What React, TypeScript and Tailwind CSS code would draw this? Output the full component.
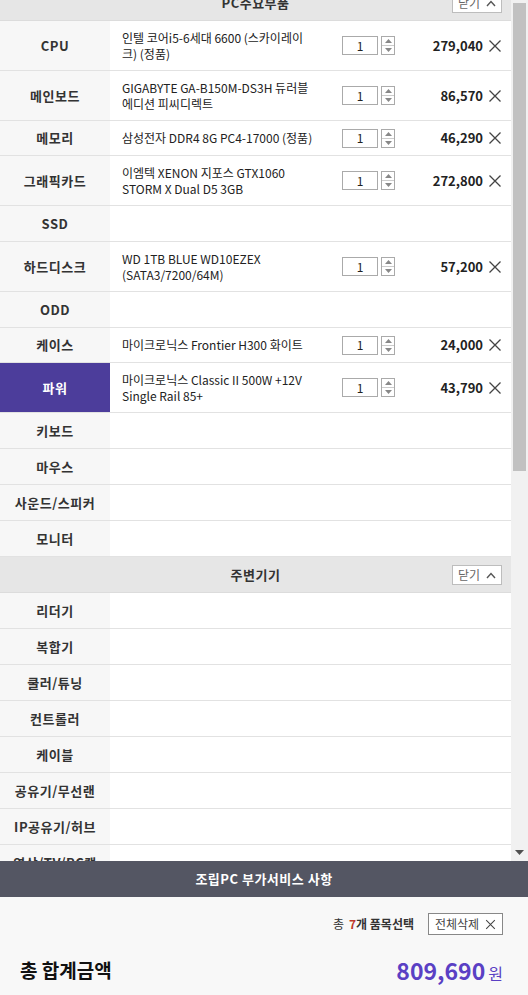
import { ReactNode } from "react";

type Part = { label: string; lines?: string[]; price?: string; active?: boolean };

const mainParts: Part[] = [
  { label: "CPU", lines: ["인텔 코어i5-6세대 6600 (스카이레이", "크) (정품)"], price: "279,040" },
  { label: "메인보드", lines: ["GIGABYTE GA-B150M-DS3H 듀러블", "에디션 피씨디렉트"], price: "86,570" },
  { label: "메모리", lines: ["삼성전자 DDR4 8G PC4-17000 (정품)"], price: "46,290" },
  { label: "그래픽카드", lines: ["이엠텍 XENON 지포스 GTX1060", "STORM X Dual D5 3GB"], price: "272,800" },
  { label: "SSD" },
  { label: "하드디스크", lines: ["WD 1TB BLUE WD10EZEX", "(SATA3/7200/64M)"], price: "57,200" },
  { label: "ODD" },
  { label: "케이스", lines: ["마이크로닉스 Frontier H300 화이트"], price: "24,000" },
  { label: "파워", lines: ["마이크로닉스 Classic II 500W +12V", "Single Rail 85+"], price: "43,790", active: true },
  { label: "키보드" },
  { label: "마우스" },
  { label: "사운드/스피커" },
  { label: "모니터" },
];

const extraParts: Part[] = [
  { label: "리더기" },
  { label: "복합기" },
  { label: "쿨러/튜닝" },
  { label: "컨트롤러" },
  { label: "케이블" },
  { label: "공유기/무선랜" },
  { label: "IP공유기/허브" },
  { label: "영상/TV/PC캠" },
];

function XIcon({ size = 14, className = "" }: { size?: number; className?: string }) {
  return (
    <svg width={size} height={size} viewBox="0 0 14 14" className={className}>
      <path d="M1.5 1.5 L12.5 12.5 M12.5 1.5 L1.5 12.5" stroke="currentColor" strokeWidth="1.3" fill="none" />
    </svg>
  );
}

function SectionHeader({ title }: { title: string }) {
  return (
    <div className="relative flex h-[36px] shrink-0 items-center justify-center border-b border-[#dcdcdc] bg-[#e6e6e6]">
      <span className="text-[13px] font-bold text-[#333] tracking-[0.5px]">{title}</span>
      <button className="absolute right-[9px] top-[8px] flex h-[20px] w-[50px] items-center justify-center gap-[6px] border border-[#bdbdbd] bg-white text-[12px] text-[#666]">
        <span>닫기</span>
        <svg width="10" height="7" viewBox="0 0 10 7">
          <path d="M1 6 L5 1.5 L9 6" stroke="#555" strokeWidth="1.4" fill="none" />
        </svg>
      </button>
    </div>
  );
}

function Qty() {
  return (
    <div className="flex items-center gap-[3px]">
      <div className="flex h-[19px] w-[36px] items-center justify-center border border-[#aaa] bg-white text-[12px] text-[#222]">
        1
      </div>
      <div className="flex h-[19px] w-[14px] flex-col border border-[#aaa] bg-white">
        <div className="flex flex-1 items-center justify-center border-b border-[#ccc]">
          <svg width="7" height="4" viewBox="0 0 7 4"><path d="M0 4 L3.5 0 L7 4 Z" fill="#888" /></svg>
        </div>
        <div className="flex flex-1 items-center justify-center">
          <svg width="7" height="4" viewBox="0 0 7 4"><path d="M0 0 L3.5 4 L7 0 Z" fill="#888" /></svg>
        </div>
      </div>
    </div>
  );
}

function Row({ part }: { part: Part }) {
  const n = part.lines?.length ?? 0;
  // two-line rows 50px, one-line product rows 35px, empty rows 36px
  const h = n > 1 ? "h-[50px]" : n === 1 ? "h-[35px]" : "h-[36px]";
  return (
    <div className={`flex shrink-0 border-b border-[#e2e2e2] ${h}`}>
      <div
        className={`flex w-[110px] shrink-0 items-center justify-center text-[13px] font-bold tracking-[0.5px] ${
          part.active ? "bg-[#4c3d9b] text-white" : "bg-[#f7f7f7] text-[#333]"
        }`}
      >
        {part.label}
      </div>
      <div className="flex flex-1 items-center bg-white">
        {part.lines && (
          <>
            <div className="w-[232px] shrink-0 pl-3 text-[12px] leading-[16px] text-[#222]">
              {part.lines.map((l) => (
                <div key={l} className="whitespace-nowrap">{l}</div>
              ))}
            </div>
            <Qty />
            <div className="flex-1 text-right text-[13px] font-bold text-[#222]">{part.price}</div>
            <XIcon className="ml-[5px] mr-[9px] text-[#444]" />
          </>
        )}
      </div>
    </div>
  );
}

function Scrollbar() {
  return (
    <div className="flex w-[17px] shrink-0 flex-col bg-[#f1f1f1]">
      <div className="mx-[2px] mt-[3px] h-[468px] bg-[#c1c1c1]" />
      <div className="flex-1" />
      <div className="flex h-[17px] items-center justify-center">
        <svg width="9" height="5" viewBox="0 0 9 5"><path d="M0 0 L4.5 5 L9 0 Z" fill="#505050" /></svg>
      </div>
    </div>
  );
}

function Section({ title, parts, children }: { title: string; parts: Part[]; children?: ReactNode }) {
  return (
    <>
      <SectionHeader title={title} />
      {parts.map((p) => (
        <Row key={p.label} part={p} />
      ))}
      {children}
    </>
  );
}

export default function App() {
  return (
    <div
      className="flex h-[995px] w-[528px] flex-col overflow-hidden bg-white"
      style={{ fontFamily: '"Noto Sans CJK KR", "Noto Sans", sans-serif' }}
    >
      <div className="flex h-[861px] shrink-0">
        <div className="flex flex-1 flex-col overflow-hidden">
          <div className="-mt-[15px] flex flex-col">
            <Section title="PC주요부품" parts={mainParts} />
            <Section title="주변기기" parts={extraParts} />
          </div>
        </div>
        <Scrollbar />
      </div>

      <div className="flex h-[36px] shrink-0 items-center justify-center bg-[#545663] text-[13px] font-bold tracking-[0.5px] text-white">
        조립PC 부가서비스 사항
      </div>

      <div className="flex flex-1 flex-col bg-[#f8f8f8] px-[20px] pr-[25px]">
        <div className="mt-[16px] flex items-center justify-end">
          <span className="text-[12px] text-[#333]">총</span>
          <span className="ml-[5px] text-[12px] font-bold text-[#c0392b]">7</span>
          <span className="text-[12px] font-bold text-[#333]">개 품목선택</span>
          <button className="ml-[14px] flex h-[22px] w-[75px] items-center justify-center gap-[6px] border border-[#888] bg-white text-[12px] text-[#444]">
            <span>전체삭제</span>
            <XIcon size={11} />
          </button>
        </div>
        <div className="mt-[18px] flex items-center justify-between">
          <span className="text-[19px] font-bold text-[#111]">총 합계금액</span>
          <span className="flex items-baseline gap-[3px] text-[#5a40c4]">
            <span className="text-[23px] font-bold">809,690</span>
            <span className="text-[16px]">원</span>
          </span>
        </div>
      </div>
    </div>
  );
}
